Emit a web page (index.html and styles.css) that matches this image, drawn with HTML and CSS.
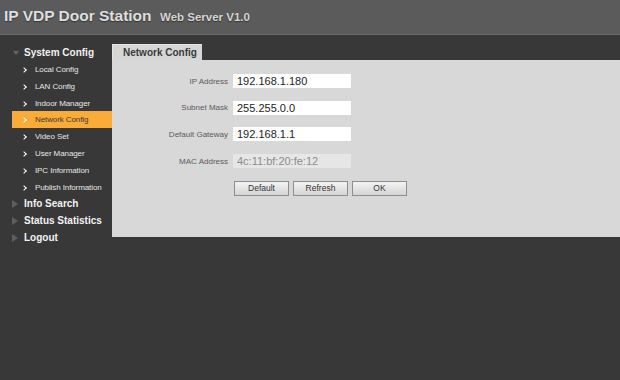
FILE: index.html
```html
<!DOCTYPE html>
<html lang="en">
<head>
  <meta charset="UTF-8">
  <title>IP VDP Door Station</title>
  <link rel="stylesheet" href="styles.css">
</head>
<body>
<div class="header">
  <span class="title">IP VDP Door Station</span>
  <span class="subtitle">Web Server V1.0</span>
</div>
<div class="main">
  <div class="menu">
    <div class="group open">System Config</div>
    <div class="item">Local Config</div>
    <div class="item">LAN Config</div>
    <div class="item">Indoor Manager</div>
    <div class="item active">Network Config</div>
    <div class="item">Video Set</div>
    <div class="item">User Manager</div>
    <div class="item">IPC Information</div>
    <div class="item">Publish Information</div>
    <div class="group">Info Search</div>
    <div class="group">Status Statistics</div>
    <div class="group">Logout</div>
  </div>
  <div class="content">
    <div class="tab">Network Config</div>
    <div class="panel">
      <div class="row">
        <label>IP Address</label>
        <input type="text" value="192.168.1.180">
      </div>
      <div class="row">
        <label>Subnet Mask</label>
        <input type="text" value="255.255.0.0">
      </div>
      <div class="row">
        <label>Default Gateway</label>
        <input type="text" value="192.168.1.1">
      </div>
      <div class="row">
        <label>MAC Address</label>
        <input type="text" value="4c:11:bf:20:fe:12" disabled>
      </div>
      <div class="buttons">
        <button>Default</button>
        <button>Refresh</button>
        <button>OK</button>
      </div>
    </div>
  </div>
</div>
</body>
</html>
```

FILE: styles.css
```css
* {
  margin: 0;
  padding: 0;
  box-sizing: border-box;
}

body {
  background-color: #383838;
  font-family: "Liberation Sans", Arial, sans-serif;
  width: 620px;
  height: 380px;
  overflow: hidden;
}

.header {
  height: 35px;
  background-color: #5b5b5b;
  border-bottom: 1px solid #6b6b6b;
  padding: 7px 0 0 4px;
  white-space: nowrap;
}

.title {
  font-size: 15.5px;
  font-weight: bold;
  color: #dedede;
  text-shadow: 0 1px 1px #333;
}

.subtitle {
  font-size: 11.5px;
  font-weight: bold;
  color: #d4d4d4;
  margin-left: 4px;
  text-shadow: 0 1px 1px #333;
}

.main {
  display: flex;
}

.menu {
  width: 112px;
  padding-top: 9px;
}

.group {
  height: 17px;
  line-height: 17px;
  padding-left: 24px;
  font-size: 10px;
  font-weight: bold;
  color: #f2f2f2;
  position: relative;
}

.group:before {
  content: "";
  position: absolute;
  left: 12px;
  top: 5px;
  border-style: solid;
  border-width: 4px 0 4px 6px;
  border-color: transparent transparent transparent #5e5e5e;
}

.group.open:before {
  left: 13px;
  top: 7px;
  border-width: 4px 3px 0 3px;
  border-color: #666 transparent transparent transparent;
}

.item {
  height: 16.8px;
  line-height: 16px;
  padding-top: 1px;
  margin-left: 12px;
  padding-left: 23px;
  font-size: 8px;
  letter-spacing: -0.1px;
  color: #e6e6e6;
  position: relative;
  white-space: nowrap;
}

.item:before {
  content: "";
  position: absolute;
  left: 10px;
  top: 7px;
  width: 3px;
  height: 3px;
  border-top: 1.5px solid #fff;
  border-right: 1.5px solid #fff;
  transform: rotate(45deg);
}

.item.active {
  background-color: #fbab37;
  color: #3a3a3a;
}

.content {
  flex: 1;
  padding-top: 9px;
}

.tab {
  width: 90px;
  height: 16px;
  line-height: 16px;
  background-color: #d6d6d6;
  border-left: 1px solid #e4e4e4;
  border-top: 1px solid #e4e4e4;
  padding-left: 10px;
  font-size: 10px;
  font-weight: bold;
  color: #3a3a3a;
  white-space: nowrap;
}

.panel {
  height: 177px;
  background-color: #d8d8d8;
  padding-top: 14px;
}

.row {
  display: flex;
  align-items: center;
  height: 14px;
  margin-bottom: 12.7px;
}

.row label {
  width: 121px;
  text-align: right;
  padding-right: 5px;
  font-size: 8px;
  color: #5a5a5a;
  white-space: nowrap;
}

.row input {
  width: 118px;
  height: 14px;
  border: none;
  background-color: #fff;
  padding-left: 4px;
  font-family: "Liberation Sans", Arial, sans-serif;
  font-size: 11px;
  color: #222;
}

.row input:disabled {
  background-color: #e6e6e6;
  color: #8c8c8c;
}

.buttons {
  display: flex;
  gap: 4px;
  padding-left: 122px;
  margin-top: 1px;
}

.buttons button {
  width: 55px;
  height: 15px;
  border: 1px solid #8e8e8e;
  background: linear-gradient(#f4f4f4, #d4d4d4);
  font-family: "Liberation Sans", Arial, sans-serif;
  font-size: 8.5px;
  color: #333;
}
```
